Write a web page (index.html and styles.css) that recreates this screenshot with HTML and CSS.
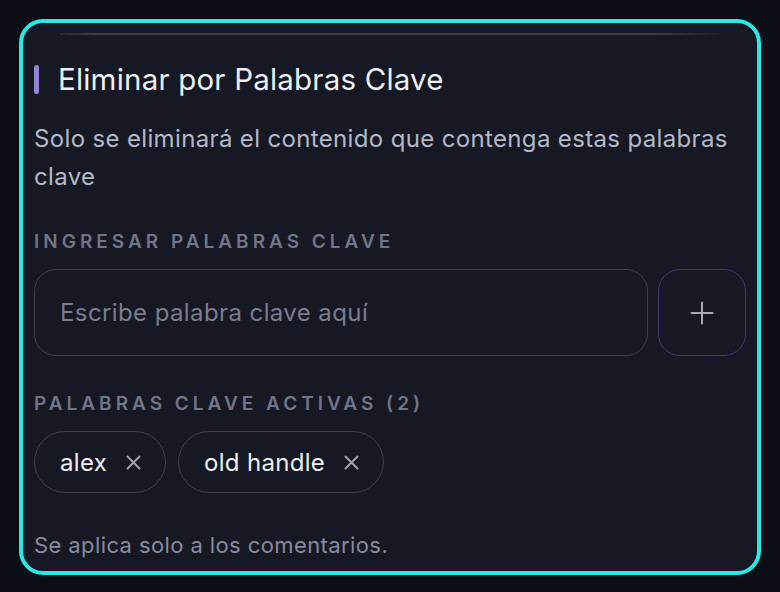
FILE: index.html
```html
<!DOCTYPE html>
<html lang="es">
<head>
<meta charset="utf-8">
<link rel="stylesheet" href="styles.css">
</head>
<body>
<section class="card">
  <div class="divider"></div>
  <h2 class="title"><span class="accent"></span>Eliminar por Palabras Clave</h2>
  <p class="desc">Solo se eliminará el contenido que contenga estas palabras clave</p>
  <div class="label label-input">Ingresar palabras clave</div>
  <div class="input-row">
    <div class="input">Escribe palabra clave aquí</div>
    <button class="add" type="button" aria-label="Agregar">
      <svg width="24" height="24" viewBox="0 0 24 24" fill="none" stroke="currentColor" stroke-width="2" stroke-linecap="round"><path d="M12 1.5v21M1.5 12h21"/></svg>
    </button>
  </div>
  <div class="label label-active">Palabras clave activas (2)</div>
  <div class="chips">
    <span class="chip">alex<svg class="x" width="15" height="15" viewBox="0 0 15 15" fill="none" stroke="currentColor" stroke-width="2" stroke-linecap="round"><path d="M1.5 1.5l12 12M13.5 1.5l-12 12"/></svg></span>
    <span class="chip">old handle<svg class="x" width="15" height="15" viewBox="0 0 15 15" fill="none" stroke="currentColor" stroke-width="2" stroke-linecap="round"><path d="M1.5 1.5l12 12M13.5 1.5l-12 12"/></svg></span>
  </div>
  <p class="note">Se aplica solo a los comentarios.</p>
</section>
</body>
</html>
```
FILE: styles.css
```css
html, body {
  margin: 0;
  padding: 0;
  background: #0d0f16;
  font-family: Inter, "Noto Sans", sans-serif;
}
.card {
  box-sizing: border-box;
  margin: 19px;
  width: 742px;
  height: 556px;
  border: 4px solid #2ae8e6;
  border-radius: 24px;
  background: #161823;
  padding: 10px 11px 0;
  display: flex;
  flex-direction: column;
}
.divider {
  height: 2px;
  margin: 0 26px 0 26px;
  background: linear-gradient(90deg, rgba(60,62,76,0.4), #3a3c4a 5%, #3a3c4a 90%, rgba(60,62,76,0.2));
}
.title {
  margin: 27px 0 0;
  display: flex;
  align-items: center;
  font-size: 29.5px;
  font-weight: 400;
  letter-spacing: 0.2px;
  color: #eef0f6;
  line-height: 34px;
}
.accent {
  width: 5px;
  height: 29px;
  border-radius: 3px;
  background: #9585d9;
  margin-right: 19px;
}
.desc {
  margin: 24px 0 0;
  font-size: 24px;
  letter-spacing: 0.35px;
  line-height: 38px;
  color: #b5b8c7;
}
.label {
  font-size: 19px;
  font-weight: 600;
  letter-spacing: 4px;
  text-transform: uppercase;
  color: #727587;
  line-height: 24px;
}
.label-input { margin-top: 34px; }
.label-active { margin-top: 36px; }
.input-row {
  display: flex;
  gap: 10px;
  margin-top: 15px;
}
.input {
  flex: 1;
  box-sizing: border-box;
  height: 87px;
  border: 1.5px solid #3d3f4d;
  border-radius: 22px;
  padding: 0 25px;
  display: flex;
  align-items: center;
  font-size: 24px;
  letter-spacing: 0.4px;
  color: #7a7d8e;
}
.add {
  box-sizing: border-box;
  width: 88px;
  height: 87px;
  border: 1.5px solid #3f3a6e;
  border-radius: 22px;
  background: transparent;
  color: #a8a9bb;
  display: flex;
  align-items: center;
  justify-content: center;
  padding: 0;
}
.chips {
  display: flex;
  gap: 12px;
  margin-top: 15px;
}
.chip {
  box-sizing: border-box;
  height: 62px;
  border: 1.5px solid #3d3f4d;
  border-radius: 31px;
  padding: 0 24px 0 25px;
  display: flex;
  align-items: center;
  gap: 19px;
  font-size: 24px;
  letter-spacing: 0.3px;
  color: #eef0f6;
}
.x { color: #a0a2b2; }
.note {
  margin: 38px 0 0;
  font-size: 22px;
  letter-spacing: 0.4px;
  color: #888b9c;
  line-height: 28px;
}
```
